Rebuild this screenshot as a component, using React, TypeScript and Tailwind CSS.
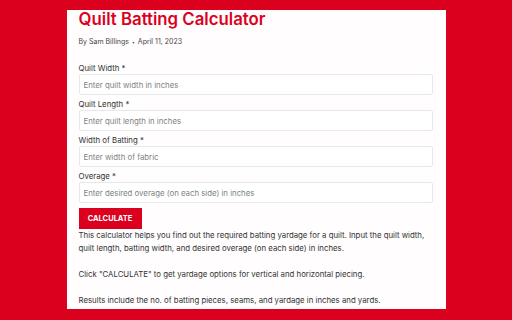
import React from 'react';

interface FieldProps {
  label: string;
  placeholder: string;
}

const Field: React.FC<FieldProps> = ({ label, placeholder }) => (
  <div className="mb-[3px] flex flex-col">
    <label className="text-[7.8px] leading-[12px] text-[#333333]">{label}</label>
    <input
      type="text"
      placeholder={placeholder}
      className="h-[21px] w-full rounded-[2px] border border-[#e6e8ea] bg-white px-[4px] text-[7.8px] text-[#333] outline-none placeholder:text-[#808285]"
    />
  </div>
);

const App: React.FC = () => {
  return (
    <div className="h-[320px] w-[512px] overflow-hidden bg-[#dc001f] pt-[10px] font-['Inter',sans-serif]">
      <div className="mx-auto h-[299px] w-[379px] overflow-hidden bg-[#fffdfd] px-[12px]">
        {/* Title */}
        <h1 className="text-[16.8px] leading-[18px] font-semibold text-[#dc001f]">
          Quilt Batting Calculator
        </h1>

        {/* Byline */}
        <div className="mt-[8px] flex items-center gap-[3px] text-[7px] leading-[12px] text-[#444]">
          <span>By Sam Billings</span>
          <span className="text-[5px]">•</span>
          <span>April 11, 2023</span>
        </div>

        {/* Form */}
        <div className="mt-[14px] flex w-[354px] flex-col">
          <Field label="Quilt Width *" placeholder="Enter quilt width in inches" />
          <Field label="Quilt Length *" placeholder="Enter quilt length in inches" />
          <Field label="Width of Batting *" placeholder="Enter width of fabric" />
          <Field label="Overage *" placeholder="Enter desired overage (on each side) in inches" />
          <button className="mt-[2px] h-[21px] w-[63px] bg-[#dc001f] text-[7.5px] font-bold text-white">
            CALCULATE
          </button>
        </div>

        {/* Description */}
        <div className="text-[7.8px] leading-[13px] text-[#333333]">
          <p>
            This calculator helps you find out the required batting yardage for a quilt. Input the quilt width,
            quilt length, batting width, and desired overage (on each side) in inches.
          </p>
          <p className="mt-[13px]">Click "CALCULATE" to get yardage options for vertical and horizontal piecing.</p>
          <p className="mt-[13px]">Results include the no. of batting pieces, seams, and yardage in inches and yards.</p>
        </div>
      </div>
    </div>
  );
};

export default App;
